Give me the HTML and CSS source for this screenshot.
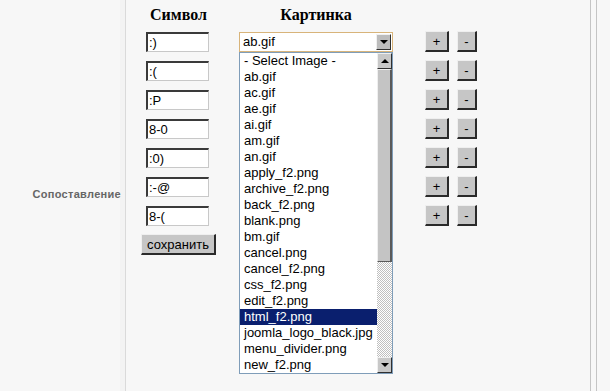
FILE: index.html
```html
<!DOCTYPE html>
<html>
<head>
<meta charset="utf-8">
<link rel="stylesheet" href="styles.css">
</head>
<body>
<div class="page">
  <div class="label-col"><span class="label">Сопоставление</span></div>
  <div class="main">
    <div class="sym">
      <div class="head">Символ</div>
      <input class="field" type="text" value=":)">
      <input class="field" type="text" value=":(">
      <input class="field" type="text" value=":P">
      <input class="field" type="text" value="8-0">
      <input class="field" type="text" value=":0)">
      <input class="field" type="text" value=":-@">
      <input class="field" type="text" value="8-(">
      <button class="save">сохранить</button>
    </div>
    <div class="pic">
      <div class="head">Картинка</div>
      <div class="select">
        <span class="select-text">ab.gif</span>
        <span class="arrow-btn"><span class="tri down"></span></span>
      </div>
      <div class="listbox">
        <div class="items">
          <div class="item">- Select Image -</div>
          <div class="item">ab.gif</div>
          <div class="item">ac.gif</div>
          <div class="item">ae.gif</div>
          <div class="item">ai.gif</div>
          <div class="item">am.gif</div>
          <div class="item">an.gif</div>
          <div class="item">apply_f2.png</div>
          <div class="item">archive_f2.png</div>
          <div class="item">back_f2.png</div>
          <div class="item">blank.png</div>
          <div class="item">bm.gif</div>
          <div class="item">cancel.png</div>
          <div class="item">cancel_f2.png</div>
          <div class="item">css_f2.png</div>
          <div class="item">edit_f2.png</div>
          <div class="item selected">html_f2.png</div>
          <div class="item">joomla_logo_black.jpg</div>
          <div class="item">menu_divider.png</div>
          <div class="item">new_f2.png</div>
        </div>
        <div class="scrollbar">
          <span class="sb-btn"><span class="tri up"></span></span>
          <span class="thumb"></span>
          <span class="track"></span>
          <span class="sb-btn"><span class="tri down"></span></span>
        </div>
      </div>
    </div>
    <div class="ops">
      <div class="ops-row"><button class="op plus">+</button><button class="op minus">-</button></div>
      <div class="ops-row"><button class="op plus">+</button><button class="op minus">-</button></div>
      <div class="ops-row"><button class="op plus">+</button><button class="op minus">-</button></div>
      <div class="ops-row"><button class="op plus">+</button><button class="op minus">-</button></div>
      <div class="ops-row"><button class="op plus">+</button><button class="op minus">-</button></div>
      <div class="ops-row"><button class="op plus">+</button><button class="op minus">-</button></div>
      <div class="ops-row"><button class="op plus">+</button><button class="op minus">-</button></div>
    </div>
  </div>
  <div class="edge"></div>
</div>
</body>
</html>
```

FILE: styles.css
```css
html, body {
  margin: 0;
  padding: 0;
  background: #f7f7f7;
}

.page {
  display: flex;
  width: 610px;
  height: 391px;
  overflow: hidden;
  font-family: "Liberation Sans", Arial, sans-serif;
}

.label-col {
  width: 121px;
  padding-right: 4px;
  border-right: 1px solid #dadada;
  display: flex;
  align-items: center;
  justify-content: flex-end;
  background: linear-gradient(to right, #f7f7f7 120px, #f3f3f3 120px);
}

.label {
  font-size: 11px;
  font-weight: bold;
  letter-spacing: 0.3px;
  color: #666;
  margin-top: -3px;
}

.main {
  flex: 1;
  display: flex;
  align-items: flex-start;
  padding-left: 15px;
}

.head {
  font-family: "Liberation Serif", "Times New Roman", serif;
  font-weight: bold;
  font-size: 16px;
  line-height: 18px;
  height: 18px;
  padding-top: 6px;
  margin-bottom: 8px;
  color: #000;
  text-align: center;
}

.sym {
  width: 75px;
  display: flex;
  flex-direction: column;
}

.field {
  box-sizing: border-box;
  width: 63px;
  height: 20px;
  margin: 0 0 9px 5px;
  padding: 0 0 0 1px;
  border-style: solid;
  border-width: 2px 1px 1px 2px;
  border-color: #3a3a3a #c8c8c8 #c8c8c8 #3a3a3a;
  background: #fff;
  font-family: "Liberation Sans", Arial, sans-serif;
  font-size: 13px;
  color: #000;
  outline: none;
}

.save {
  box-sizing: border-box;
  width: 75px;
  height: 21px;
  margin-top: -1px;
  padding: 0;
  background: #c6c6c6;
  border-style: solid;
  border-width: 1px 2px 2px 1px;
  border-color: #efefef #2a2a2a #2a2a2a #efefef;
  font-family: "Liberation Sans", Arial, sans-serif;
  font-size: 13px;
  color: #000;
  line-height: 17px;
}

.pic {
  position: relative;
  width: 154px;
  margin-left: 23px;
}

.select {
  box-sizing: border-box;
  height: 20px;
  display: flex;
  align-items: center;
  background: #fff;
  border: 1px solid #d8b47a;
}

.select-text {
  flex: 1;
  font-size: 13px;
  padding-left: 3px;
  line-height: 16px;
}

.arrow-btn {
  box-sizing: border-box;
  width: 15px;
  height: 16px;
  margin-right: 1px;
  background: #bcbcbc;
  border-style: solid;
  border-width: 1px;
  border-color: #f0f0f0 #303030 #303030 #f0f0f0;
  display: flex;
  align-items: center;
  justify-content: center;
}

.tri {
  width: 0;
  height: 0;
  border-left: 4px solid transparent;
  border-right: 4px solid transparent;
}

.tri.down {
  border-top: 4px solid #000;
}

.tri.up {
  border-bottom: 4px solid #000;
}

.listbox {
  position: absolute;
  left: 0;
  top: 52px;
  box-sizing: border-box;
  width: 154px;
  height: 322px;
  border: 1px solid #7f9db9;
  background: #fff;
  display: flex;
}

.items {
  flex: 1;
}

.item {
  height: 16px;
  line-height: 16px;
  font-size: 13px;
  padding-left: 4px;
  color: #000;
  white-space: nowrap;
}

.item.selected {
  background: #0a1f6e;
  color: #fff;
}

.scrollbar {
  width: 15px;
  display: flex;
  flex-direction: column;
}

.sb-btn {
  box-sizing: border-box;
  height: 16px;
  background: #c8c8c8;
  border-style: solid;
  border-width: 1px;
  border-color: #f0f0f0 #303030 #303030 #f0f0f0;
  display: flex;
  align-items: center;
  justify-content: center;
}

.thumb {
  box-sizing: border-box;
  height: 193px;
  background: #c4c4c4;
  border-style: solid;
  border-width: 1px 2px 1px 1px;
  border-color: #efefef #5a5a5a #5a5a5a #efefef;
}

.track {
  flex: 1;
  background: repeating-conic-gradient(#c0c0c0 0 25%, #ffffff 0 50%) 0 0 / 2px 2px;
}

.ops {
  margin-left: 32px;
  padding-top: 31px;
  display: flex;
  flex-direction: column;
  gap: 8px;
}

.ops-row {
  display: flex;
  gap: 8px;
}

.op {
  box-sizing: border-box;
  height: 21px;
  padding: 0;
  background: #c6c6c6;
  border-style: solid;
  border-width: 1px 2px 2px 1px;
  border-color: #efefef #2a2a2a #2a2a2a #efefef;
  font-family: "Liberation Sans", Arial, sans-serif;
  font-size: 13px;
  color: #000;
  line-height: 17px;
}

.op.plus {
  width: 24px;
}

.op.minus {
  width: 20px;
}

.edge {
  width: 5px;
  margin-right: 13px;
  border-left: 1px solid #c4c4c4;
  border-right: 1px solid #c4c4c4;
}
```
